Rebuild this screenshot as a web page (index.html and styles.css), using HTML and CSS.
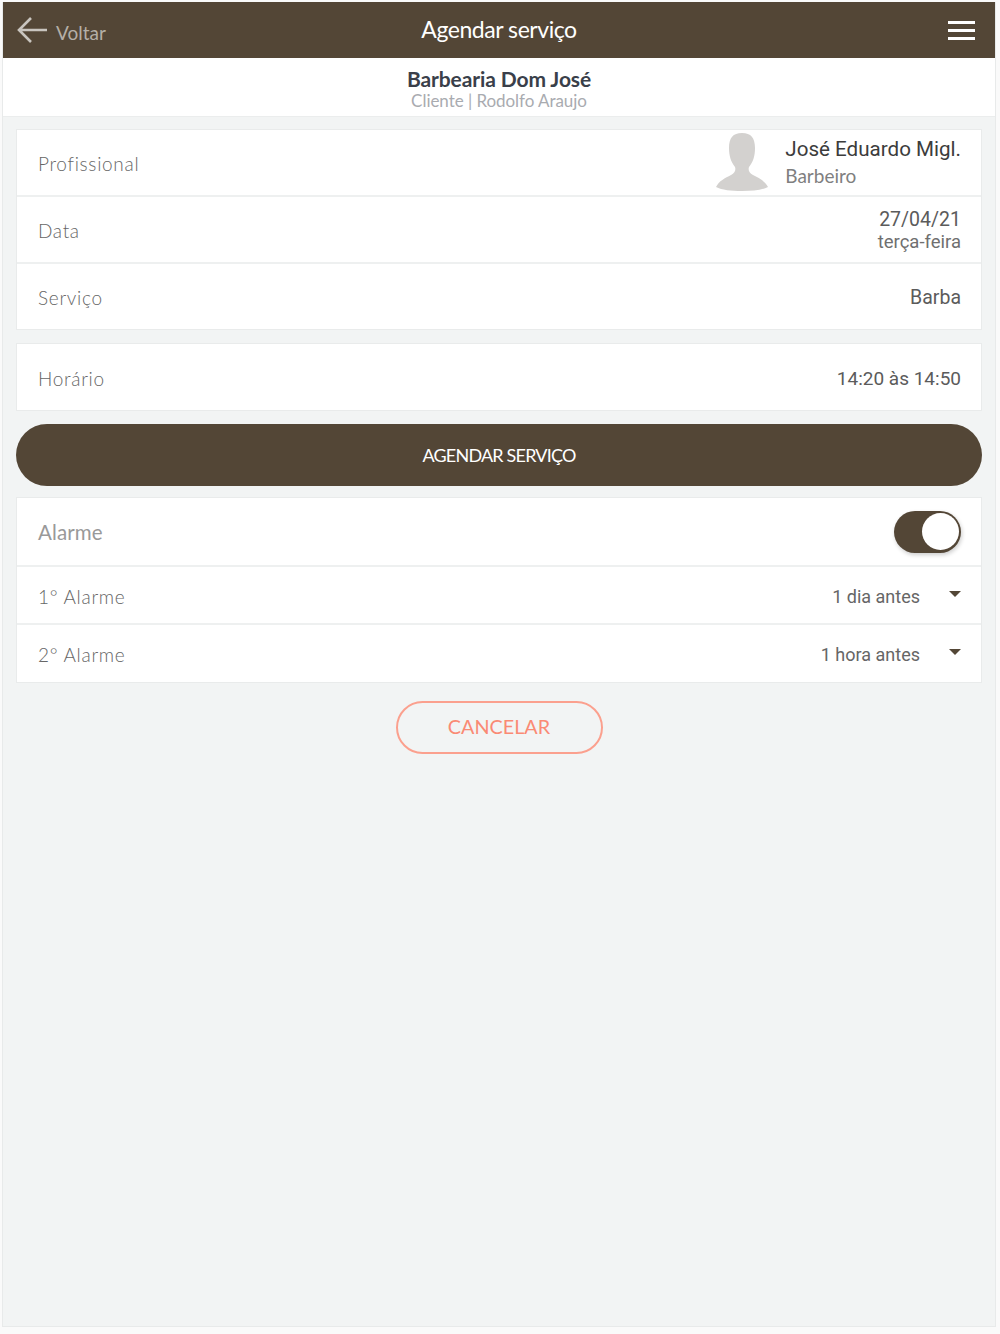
FILE: index.html
```html
<!DOCTYPE html>
<html lang="pt">
<head>
<meta charset="utf-8">
<title>Agendar serviço</title>
<link rel="stylesheet" href="styles.css">
</head>
<body>
<div class="app">
  <header class="topbar">
    <div class="back">
      <svg class="back-icon" width="32" height="28" viewBox="0 0 32 28"><path d="M31 14H3M15 2 3 14l12 12" fill="none" stroke="#c9c5bf" stroke-width="2.6"/></svg>
      <span class="back-label">Voltar</span>
    </div>
    <h1 class="title">Agendar serviço</h1>
    <div class="menu"><i></i><i></i><i></i></div>
  </header>
  <div class="subhead">
    <div class="shop">Barbearia Dom José</div>
    <div class="client">Cliente | Rodolfo Araujo</div>
  </div>
  <main class="content">
    <section class="card">
      <div class="row">
        <span class="label">Profissional</span>
        <div class="pro">
          <svg class="avatar" width="52" height="58" viewBox="0 0 52 58"><path d="M26 0c9 0 13 5 13 15 0 8-2 14-6 19-1 3 0 6 4 8 6 3 12 6 15 12-6 3-15 4-26 4S6 57 0 54c3-6 9-9 15-12 4-2 5-5 4-8-4-5-6-11-6-19C13 5 17 0 26 0z" fill="#d3d1cf"/></svg>
          <div class="pro-text">
            <div class="pro-name">José Eduardo Migl.</div>
            <div class="pro-role">Barbeiro</div>
          </div>
        </div>
      </div>
      <div class="row">
        <span class="label">Data</span>
        <div class="value stack"><div>27/04/21</div><div class="weekday">terça-feira</div></div>
      </div>
      <div class="row">
        <span class="label">Serviço</span>
        <div class="value value-wide">Barba</div>
      </div>
    </section>
    <section class="card">
      <div class="row">
        <span class="label">Horário</span>
        <div class="value">14:20 às 14:50</div>
      </div>
    </section>
    <button class="primary">AGENDAR SERVIÇO</button>
    <section class="card alarms">
      <div class="row alarm-main">
        <span class="label label-lato">Alarme</span>
        <div class="toggle"><span class="knob"></span></div>
      </div>
      <div class="row alarm-row">
        <span class="label">1° Alarme</span>
        <div class="select"><span>1 dia antes</span><i class="caret"></i></div>
      </div>
      <div class="row alarm-row">
        <span class="label">2° Alarme</span>
        <div class="select"><span>1 hora antes</span><i class="caret"></i></div>
      </div>
    </section>
    <div class="cancel-wrap"><button class="cancel">CANCELAR</button></div>
  </main>
</div>
</body>
</html>
```
FILE: styles.css
```css
* { box-sizing: border-box; }
html, body { height: 100%; }
body {
  margin: 0;
  background: #fafafa;
  font-family: Lato, "Liberation Sans", sans-serif;
  padding: 2px 4px 7px 2px;
}
.app {
  height: 100%;
  background: #f2f4f4;
  border: 1px solid #e8eaea;
  border-top: 0;
  display: flex;
  flex-direction: column;
}
.topbar {
  height: 56px;
  background: #534636;
  display: flex;
  align-items: center;
  justify-content: space-between;
  position: relative;
  flex: none;
}
.back {
  display: flex;
  align-items: center;
  padding-left: 13px;
  gap: 8px;
}
.back-label { color: #b5afa7; font-size: 19px; font-weight: 400; padding-top: 5px; }
.title {
  position: absolute;
  left: 0;
  right: 0;
  top: 12px;
  margin: 0;
  text-align: center;
  color: #fff;
  font-size: 23px;
  font-weight: 400;
  line-height: 30px;
  letter-spacing: -0.45px;
}
.menu { display: flex; flex-direction: column; gap: 5px; padding-right: 20px; }
.menu i { display: block; width: 27px; height: 3px; background: #fff; }
.subhead {
  background: #fff;
  height: 59px;
  flex: none;
  border-bottom: 1px solid #ebeded;
  text-align: center;
  padding-top: 8px;
}
.shop { color: #3a3f4a; font-size: 21px; font-weight: 700; line-height: 25px; letter-spacing: -0.1px; }
.client { color: #a9abb0; font-size: 17px; line-height: 19px; letter-spacing: -0.05px; }
.content { padding: 12px 13px 0 13px; }
.card {
  background: #fff;
  border: 1px solid #e9ebeb;
  margin-bottom: 13px;
}
.row {
  height: 67px;
  padding: 2px 20px 0 21px;
  display: flex;
  align-items: center;
  justify-content: space-between;
  border-bottom: 2px solid #eef0f0;
}
.row:last-child { border-bottom: 0; height: 65px; }
.card:nth-of-type(2) .row { height: 66px; }
.label { color: #666; font-size: 19px; font-weight: 300; letter-spacing: 0.7px; }
.label-lato { font-weight: 400; color: #999; letter-spacing: 0.1px; font-size: 20.5px; }
.value { color: #5b5b5b; font-family: Roboto, sans-serif; font-size: 19px; font-weight: 400; text-align: right; line-height: 23px; }
.value-wide { font-size: 19.5px; }
.stack { font-size: 19.5px; }
.weekday { color: #6f6f6f; font-size: 18.5px; line-height: 22px; }
.pro { display: flex; align-items: center; gap: 17px; }
.avatar { display: block; margin-top: -3px; }
.pro-text { margin-top: -2px; }
.pro-name { color: #3c3c3c; font-family: Roboto, sans-serif; font-size: 20.6px; line-height: 26px; }
.pro-role { color: #7f7f7f; font-family: Lato, sans-serif; font-size: 19px; line-height: 27px; }
.primary {
  display: block;
  width: 100%;
  height: 62px;
  margin: 0 0 11px;
  border: 0;
  border-radius: 31px;
  background: #534636;
  color: #fff;
  font-family: Lato, sans-serif;
  font-size: 18px;
  font-weight: 400;
  letter-spacing: -0.8px;
}
.alarm-main { height: 69px; border-bottom: 2px solid #eef0f0; padding-top: 0; }
.alarm-row { height: 58px; }
.alarm-row:last-child { height: 57px; }
.toggle {
  width: 67px;
  height: 42px;
  border-radius: 21px;
  background: #534636;
  display: flex;
  align-items: center;
  justify-content: flex-end;
  padding-right: 2px;
  box-shadow: 1px 2px 4px rgba(0,0,0,.2);
}
.knob { width: 37px; height: 37px; border-radius: 50%; background: #fff; }
.select { display: flex; align-items: center; gap: 29px; color: #666; font-family: Roboto, sans-serif; font-size: 18px; }
.caret {
  width: 0;
  height: 0;
  border-left: 6px solid transparent;
  border-right: 6px solid transparent;
  border-top: 6px solid #534636;
  margin-bottom: 5px;
}
.cancel-wrap { display: flex; justify-content: center; padding-top: 5px; }
.cancel {
  width: 207px;
  height: 53px;
  padding: 0 0 4px;
  border: 2px solid #fba08e;
  border-radius: 27px;
  background: transparent;
  color: #fa8a74;
  font-family: Lato, sans-serif;
  font-size: 19.8px;
  font-weight: 400;
}
```
